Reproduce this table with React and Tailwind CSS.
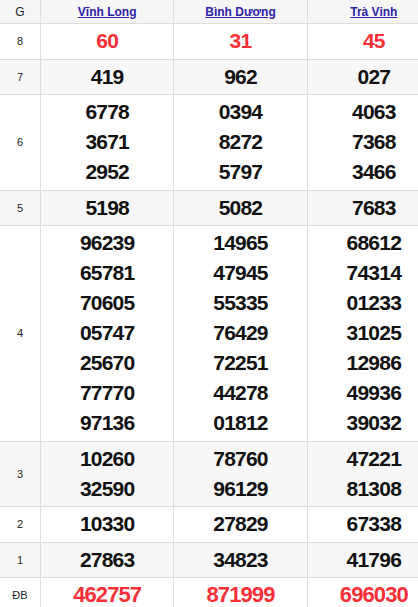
import React from 'react'

const provinces = ['Vĩnh Long', 'Bình Dương', 'Trà Vinh']

const rows = [
  { label: '8', red: true, values: [['60'], ['31'], ['45']] },
  { label: '7', values: [['419'], ['962'], ['027']] },
  { label: '6', values: [['6778', '3671', '2952'], ['0394', '8272', '5797'], ['4063', '7368', '3466']] },
  { label: '5', values: [['5198'], ['5082'], ['7683']] },
  {
    label: '4',
    values: [
      ['96239', '65781', '70605', '05747', '25670', '77770', '97136'],
      ['14965', '47945', '55335', '76429', '72251', '44278', '01812'],
      ['68612', '74314', '01233', '31025', '12986', '49936', '39032'],
    ],
  },
  { label: '3', values: [['10260', '32590'], ['78760', '96129'], ['47221', '81308']] },
  { label: '2', values: [['10330'], ['27829'], ['67338']] },
  { label: '1', values: [['27863'], ['34823'], ['41796']] },
  { label: 'ĐB', red: true, big: true, values: [['462757'], ['871999'], ['696030']] },
]

const App = () => {
  return (
    <div className="w-[418px] overflow-hidden bg-white font-['Liberation_Sans',Arial,sans-serif]">
      <div className="grid w-[441px] grid-cols-[41px_1fr_1fr_1fr]">
        <div className="flex h-[24px] items-center justify-center border-b border-r border-[#dedede] bg-[#f6f6f6] text-[12px] text-[#222]">
          G
        </div>
        {provinces.map((p) => (
          <div
            key={p}
            className="flex h-[24px] items-center justify-center border-b border-r border-[#dedede] bg-[#f6f6f6]"
          >
            <a href="#" className="text-[12px] font-bold text-[#2e22a8] underline">
              {p}
            </a>
          </div>
        ))}

        {rows.map((row, i) => {
          const shade = i % 2 === 1 ? 'bg-[#f7f7f7]' : 'bg-white'
          return (
            <React.Fragment key={row.label}>
              <div
                className={`flex items-center justify-center border-b border-r border-[#dedede] text-[11px] text-[#222] ${shade}`}
              >
                {row.label}
              </div>
              {row.values.map((nums, j) => (
                <div
                  key={j}
                  className={`flex flex-col items-center border-b border-r border-[#dedede] py-[2.25px] ${shade}`}
                >
                  {nums.map((n) => (
                    <span
                      key={n}
                      className={`font-bold leading-[30px] ${
                        row.red ? 'text-[#fb2f37]' : 'text-[#111]'
                      } ${row.big ? 'text-[22px] tracking-[-0.9px]' : 'text-[21px] tracking-[-0.8px]'}`}
                    >
                      {n}
                    </span>
                  ))}
                </div>
              ))}
            </React.Fragment>
          )
        })}
      </div>
    </div>
  )
}

export default App
